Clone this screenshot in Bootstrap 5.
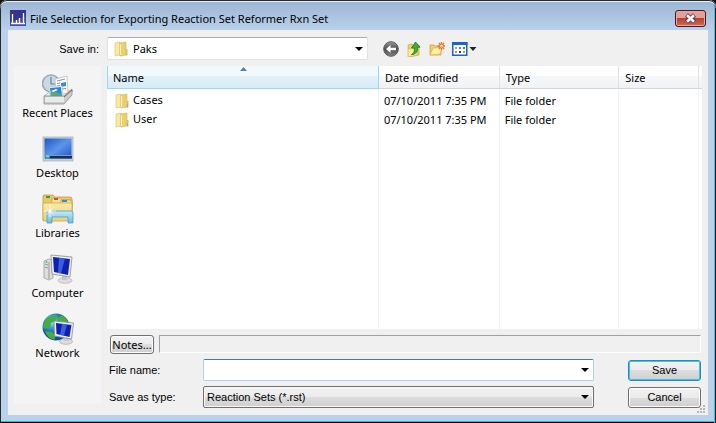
<!DOCTYPE html>
<html lang="en">
<head>
<meta charset="utf-8">
<meta name="viewport" content="width=device-width, initial-scale=1">
<title>File Selection</title>
<link href="https://cdn.jsdelivr.net/npm/bootstrap@5.3.0/dist/css/bootstrap.min.css" rel="stylesheet">
<style>
body{background:#111;color:#000;font:11px/16px "Noto Sans","Open Sans",sans-serif}
.dialog-frame{min-height:100vh;padding:0 8px 8px;background:linear-gradient(#9ab5d3,#b9d1ea 30px);border-radius:7px 7px 0 0;box-shadow:inset 0 1px #26292e,inset 0 2px #e8f0f8,inset 1px 0 #26292e,inset -1px 0 #111,inset -2px 0 #3cc5e2,inset 0 -1px #000,inset 0 -2px #2db9d6}
.titlebar{height:30px;padding:10px 2px 0}
.title-text{font-size:11px;line-height:18px;font-weight:400;margin-left:4px}
.close-btn{width:31px;height:17px;border:1px solid #4b1620;border-radius:3px;box-shadow:inset 0 0 0 1px #e5a9a0;background:linear-gradient(#dfa198 0 45%,#bb3f2c 50%,#cf6b58)}
.dialog-body{background:#f0f0f0;padding:7px 6px 7px}
.classic{font-family:"Liberation Sans",Arial,sans-serif;font-size:11px}
.look-row{height:23px;margin-bottom:6px;gap:16px}
.look-label{width:87px;margin-right:-10px;padding-right:2px}
select.combo,.name-box{border-radius:2px;color:#000;appearance:none}
.look-select{width:261px;height:23px;padding:0 20px 0 25px;border:1px solid #dfe2e9;border-top-color:#abadb3;
background:url("data:image/svg+xml,%3Csvg xmlns='http://www.w3.org/2000/svg' width='8' height='4'%3E%3Cpath d='M0 0h8L4 4z'/%3E%3C/svg%3E") right 4px center no-repeat,url("data:image/svg+xml,%3Csvg xmlns='http://www.w3.org/2000/svg' width='14' height='16'%3E%3Cpath d='M1 2l5-1v13l-5 1z' fill='%23f7e9a4' stroke='%23dcc263' stroke-width='.6'/%3E%3Cpath d='M6 2l6-1v13l-6 1z' fill='%23ecd070' stroke='%23cfae4c' stroke-width='.6'/%3E%3Cpath d='M12 8h1.500v6l-1.500 1z' fill='%23d8c06a'/%3E%3Cpath d='M6.500 3v11' stroke='%23fff6c8'/%3E%3C/svg%3E") 6px center no-repeat,#fff}
.tool-btn{border:0;background:none;padding:0;display:flex;align-items:center}
.tools{gap:7px;margin-left:-1px}
.places{width:87px;background:#f4f4f4;padding-top:3px}
.place{border:0;background:none;height:60px;padding:4px 0 0;color:#000;width:100%;display:flex;flex-direction:column;align-items:center;white-space:nowrap}
.place svg{display:block;flex:none}
.main-pane{min-width:0;margin-left:6px}
.file-list{background:#fff;min-height:160px}
.file-table{table-layout:fixed;border-collapse:separate;border-spacing:0;width:100%;height:100%;white-space:nowrap}
.file-table th{height:23px;font-weight:400;padding:2px 6px 0;border-right:1px solid #e0e1e4;border-bottom:1px solid #d5d5d5;background:linear-gradient(#fff 0 45%,#f7f8fa 45%,#f1f2f4)}
.file-table th.sorted{position:relative;border-color:#96d9f9;border-left:1px solid #96d9f9;padding-left:5px;background:linear-gradient(#f2f9fc 0 45%,#e1f1f9 45%,#d8ecf6)}
.sort-mark{position:absolute;left:49%;top:1px}
.file-table td{padding:0 5px;height:19px;border-right:1px solid #edf3fb}
.file-table td:first-child{padding-left:8px}
.file-table tr.first-file td{height:21px;padding-top:2px}
.file-table tr.blank td{height:auto}
.file-table th:last-child,.file-table td:last-child{border-right:0;padding:0}
.w-name{width:45.700%}
.w-date{width:20.300%}
.w-type{width:20.100%}
.w-size{width:13.400%}
.notes-row{margin:6px 1px 5px 3px;gap:5px}
.win-btn{border:1px solid #707070;border-radius:3px;color:#000;box-shadow:inset 0 0 0 1px #fcfcfc;background:linear-gradient(#f2f2f2 0,#ebebeb 50%,#dddddd 50%,#cfcfcf);padding:0;text-align:center}
.notes-btn{width:44px;height:19px;line-height:16px}
.notes-box{height:18px;border:1px solid #fff;border-top-color:#a0a0a0;border-left-color:#a0a0a0}
.form-line{height:22px;margin-bottom:5px;padding:0 1px 0 2px}
.form-line label{width:94px}
.action-btn{width:73px;height:21px;margin-left:34px;flex:none}
.default-btn{border-color:#3c7fb1;box-shadow:inset 0 0 0 1px #35c8f2}
.name-wrap{background:#fff;border:1px solid #b5cfe7;border-top-color:#3d7bad;border-radius:2px;height:22px}
.name-box{border:0;background:none;outline:0;padding:0 4px;min-width:0}
.type-select{height:22px;border:1px solid #707070;padding:0 20px 0 3px;
background:url("data:image/svg+xml,%3Csvg xmlns='http://www.w3.org/2000/svg' width='8' height='4'%3E%3Cpath d='M0 0h8L4 4z'/%3E%3C/svg%3E") right 4px center no-repeat,linear-gradient(#f2f2f2,#ebebeb 50%,#ddd 50%,#cfcfcf);box-shadow:inset 0 0 0 1px #f8f8f8}
.grip{position:absolute;right:2px;bottom:1px}
</style>
</head>
<body>
<svg width="0" height="0" class="position-absolute" aria-hidden="true">
<defs>
<linearGradient id="desk" x2="1" y2="1"><stop stop-color="#1c58c4"/><stop offset=".5" stop-color="#5b95ea"/><stop offset="1" stop-color="#1e55c5"/></linearGradient>
<linearGradient id="gold" x2="0" y2="1"><stop stop-color="#f9eaa6"/><stop offset="1" stop-color="#ead07b"/></linearGradient>
<linearGradient id="glass" x2="0" y2="1"><stop stop-color="#c3ebfa"/><stop offset="1" stop-color="#6dbce2"/></linearGradient>
<radialGradient id="globe" cx=".35" cy=".3"><stop stop-color="#a8e6fb"/><stop offset=".55" stop-color="#2f8fd6"/><stop offset="1" stop-color="#12509e"/></radialGradient>
<linearGradient id="ball" x2="0" y2="1"><stop stop-color="#9a9a9a"/><stop offset=".5" stop-color="#4c4c4c"/><stop offset="1" stop-color="#858585"/></linearGradient>
<symbol id="folder" viewBox="0 0 14 16"><path d="M1 2l5-1v13l-5 1z" fill="#f7e9a4" stroke="#dcc263" stroke-width=".6"/><path d="M6 2l6-1v13l-6 1z" fill="#ecd070" stroke="#cfae4c" stroke-width=".6"/><path d="M12 8h1.500v6l-1.500 1z" fill="#d8c06a"/><path d="M12.500 11v3" stroke="#7fb2dd"/><path d="M6.500 3v11" stroke="#fff6c8"/></symbol>
</defs></svg>

<div class="dialog-frame d-flex flex-column">
<header class="titlebar d-flex align-items-start">
<svg class="flex-shrink-0" width="16" height="16" aria-hidden="true"><rect width="16" height="16" fill="#4a4a9e"/><path d="M0 0h16v6L0 12z" fill="#34348c"/><path d="M2.500 4v9M6.500 10v3M9.500 8v5M13.500 3v10M1 13.500h14" stroke="#fff" stroke-width="1.300"/></svg>
<h1 class="title-text mb-0 flex-grow-1">File Selection for Exporting Reaction Set Reformer Rxn Set</h1>
<button type="button" class="close-btn p-0 d-flex align-items-center justify-content-center" aria-label="Close"><svg width="13" height="11"><path d="M2.500 2l8 7M10.500 2l-8 7" stroke="#55414d" stroke-width="4.500"/><path d="M3 2.200l7 6.600M10 2.200l-7 6.600" stroke="#f5f5f7" stroke-width="2.600"/></svg></button>
</header>

<main class="dialog-body flex-grow-1 d-flex flex-column position-relative">
<div class="look-row d-flex align-items-center">
<label class="look-label classic text-end" for="lookin">Save in:</label>
<select id="lookin" class="combo look-select"><option>Paks</option></select>
<div class="tools d-flex align-items-center">
<button type="button" class="tool-btn" aria-label="Back"><svg width="16" height="16"><circle cx="8" cy="8" r="7.300" fill="url(#ball)" stroke="#5b5b5b"/><path d="M3 8l4.500-4v2.800H13v2.400H7.500V12z" fill="#fff"/></svg></button>
<button type="button" class="tool-btn" aria-label="Up one level"><svg width="16" height="16"><path d="M2 4l4-1 1 2 6-1v10l-10 2z" fill="#efd165" stroke="#cfa638" stroke-width=".7"/><path d="M2 8l10-2-1 8-9 2z" fill="#fbeb9a" stroke="#d9b54a" stroke-width=".7"/><path d="M5.500 13.500c2.500-1 3.200-3 2.700-6.500H5.500L9.500 1l4.500 5.200h-2.500c.4 4.300-1.500 7.300-6 7.300z" fill="#3fae35" stroke="#167a19" stroke-width=".8"/></svg></button>
<button type="button" class="tool-btn" aria-label="New folder"><svg width="16" height="16"><path d="M1 4h4l1 1h6v9H1z" fill="#f0cf66" stroke="#d2a23a" stroke-width=".8"/><path d="M1 14L4 7l9-1-2 7z" fill="#fdf0a9" stroke="#dcb54e" stroke-width=".8"/><path d="M12.500 1v8M8.500 5h8M10 2l5 6M15 2l-5 6" stroke="#ee6b32" stroke-width="1.300"/><circle cx="12.500" cy="5" r="1.500" fill="#ffe46b"/></svg></button>
<button type="button" class="tool-btn" aria-label="View menu"><svg width="25" height="16"><rect x=".75" y="1.750" width="14" height="12.500" fill="#fff" stroke="#1865cc" stroke-width="1.500"/><path d="M0 1h15.500v3H0z" fill="#1865cc"/><path d="M3 6h2v2H3z" fill="#9b9ed0"/><path d="M7 6h2v2H7z" fill="#2b91d8"/><path d="M11 6h2v2h-2z" fill="#2b9b39"/><path d="M3 10h2v2H3z" fill="#f07b4a"/><path d="M7 10h2v2H7z" fill="#24399b"/><path d="M11 10h2v2h-2z" fill="#d6a51f"/><path d="M17.500 6h7L21 10z" fill="#222"/></svg></button>
</div>
</div>

<div class="d-flex flex-grow-1">
<nav class="places flex-shrink-0 mb-1" aria-label="Places">
<button type="button" class="place"><svg width="32" height="32"><path d="M2 23l7-5h22l-8 7z" fill="#eee" stroke="#999" stroke-width=".6"/><circle cx="9" cy="10.500" r="8.500" fill="#c9dae5" stroke="#9babb6" stroke-width="1.600"/><path d="M9 4v7h4" fill="none" stroke="#6b8294" stroke-width="1.200"/><path d="M13 6l12-3 1 17-12 2z" fill="#fbfbfb" stroke="#b1b6ba" stroke-width=".7"/><path d="M15 8l8-2M15 10.500l3-.5M15 13l3-.5M20 16l4-.5" stroke="#8c9096"/><path d="M19 10l5-1v4l-5 1z" fill="#3a8dcc"/><path d="M7 14l13-1 1 12H8z" fill="#fff" stroke="#bbb" stroke-width=".6"/><path d="M8 15l11-1 1 9H9z" fill="#2488d8"/><path d="M8.500 20l4-2 7 3v2l-11 1z" fill="#5ba67a"/><path d="M9 18l5-2 2 1-5 2z" fill="#fff"/><path d="M2 23h20l8-7v6l-8 9H2z" fill="#ccc" stroke="#858585" stroke-width=".7"/><path d="M3 24h19v5H3z" fill="#eaeaea"/><path d="M22 24l8-7" stroke="#666"/></svg>Recent Places</button>
<button type="button" class="place"><svg width="32" height="32"><rect x="1" y="4" width="30" height="24" fill="#c9cfd8" stroke="#a4abb6" stroke-width=".7"/><rect x="2.500" y="5.500" width="27" height="20" fill="url(#desk)"/><path d="M3 22h27v3.500H3z" fill="#17315b"/><path d="M3 22.500h27" stroke="#7e9ac4"/><circle cx="5.500" cy="23.500" r="2.500" fill="#36a3c7"/><path d="M4 23h3" stroke="#f4e35c"/></svg>Desktop</button>
<button type="button" class="place"><svg width="32" height="32"><path d="M1 27V3q0-1 1-1h9l2 2h15q2 0 2 2v21z" fill="#e8c766" stroke="#bb953b" stroke-width=".7"/><path d="M10 14V5h8l2 2h10v8z" fill="#f5df98" stroke="#c4a14d" stroke-width=".7"/><path d="M19 14V7h9l2 2v17h-5z" fill="#f5df98" stroke="#c4a14d" stroke-width=".7"/><path d="M1 10h29v18H1z" fill="url(#gold)" stroke="#c9a54c" stroke-width=".7"/><path d="M4 3h4v2H4z" fill="#29a53b"/><path d="M12 5h4v2h-4z" fill="#d84b36"/><path d="M20 7h5v2h-5z" fill="#338ddb"/><path d="M5 30V20q0-2 2-2h22q2 0 2 2v10h-5v-6H10v6z" fill="url(#glass)" stroke="#4d9fc9" stroke-width=".8"/><path d="M8 12v12M2 18h12" stroke="#fff" stroke-width=".7"/><path d="M4 14l8 8M12 14l-8 8" stroke="#fff" stroke-width=".5"/><circle cx="8" cy="18" r="1.600" fill="#fff"/></svg>Libraries</button>
<button type="button" class="place"><svg width="32" height="32"><path d="M2 8l5-2 4 1v18l-4 2-5-2z" fill="#dedede" stroke="#949494" stroke-width=".7"/><path d="M7 9v17M3 11l3 1M3 14l3 1" stroke="#999"/><circle cx="4.500" cy="9" r="1" fill="#3bd04b"/><ellipse cx="23" cy="27.500" rx="7" ry="2.800" fill="#dedede" stroke="#aaa" stroke-width=".6"/><path d="M20 21h5v6h-5z" fill="#c5c5c5"/><path d="M9 2l21 2-2 20-18-3z" fill="#eee" stroke="#8b8b8b" stroke-width=".8"/><path d="M11 4l17 2-2 16-14-3z" fill="#0c22ae"/><path d="M17 4.800l6 .7-4 15-3-.6z" fill="#4e73e8" opacity=".75"/></svg>Computer</button>
<button type="button" class="place"><svg width="32" height="32"><circle cx="14" cy="14" r="13.500" fill="url(#globe)"/><path d="M4 6l7-4 5 1-3 5-4 2-1 4-4 2-3-1q0-5 3-9zM19 2q5 2 7 7l-7 2-4-4zM3 18l7 1 4 4-2 4q-7-2-9-9z" fill="#45ad43"/><ellipse cx="24" cy="28.500" rx="6.500" ry="2.800" fill="#ddd" stroke="#9b9b9b" stroke-width=".6"/><path d="M22 23h5v5h-5z" fill="#c8c8c8"/><path d="M12 8l19.500 2-2 16-17-3z" fill="#eee" stroke="#8a8a8a" stroke-width=".8"/><path d="M14 10l15.500 2-2 12-13-3z" fill="#0c22ae"/><path d="M20 10.700l5 .7-3 11.300-4-.7z" fill="#4e73e8" opacity=".75"/></svg>Network</button>
</nav>

<section class="main-pane flex-grow-1 d-flex flex-column">
<div class="file-list flex-grow-1 d-grid">
<table class="file-table">
<colgroup><col class="w-name"><col class="w-date"><col class="w-type"><col class="w-size"><col></colgroup>
<thead><tr><th class="sorted" scope="col" aria-sort="ascending">Name<svg class="sort-mark" width="7" height="4"><path d="M0 4l3.500-4L7 4z" fill="#4f86a5"/></svg></th><th scope="col">Date modified</th><th scope="col">Type</th><th scope="col">Size</th><th></th></tr></thead>
<tbody>
<tr class="first-file"><td><svg width="14" height="16" class="me-1"><use href="#folder"/></svg>Cases</td><td>07/10/2011 7:35 PM</td><td>File folder</td><td></td><td></td></tr>
<tr><td><svg width="14" height="16" class="me-1"><use href="#folder"/></svg>User</td><td>07/10/2011 7:35 PM</td><td>File folder</td><td></td><td></td></tr>
<tr class="blank"><td></td><td></td><td></td><td></td><td></td></tr>
</tbody>
</table>
</div>
<div class="notes-row d-flex"><button type="button" class="win-btn notes-btn">Notes...</button><div class="notes-box flex-grow-1"></div></div>
<div class="form-line d-flex align-items-center classic"><label for="fname">File name:</label>
<div class="name-wrap flex-grow-1 d-flex"><input id="fname" class="name-box flex-grow-1" type="text"><button type="button" class="tool-btn pe-1" aria-label="Recent names"><svg width="8" height="4"><path d="M0 0h8L4 4z"/></svg></button></div>
<button type="button" class="win-btn default-btn action-btn">Save</button></div>
<div class="form-line d-flex align-items-center classic mb-0"><label for="ftype">Save as type:</label>
<select id="ftype" class="combo type-select flex-grow-1"><option>Reaction Sets (*.rst)</option></select>
<button type="button" class="win-btn action-btn">Cancel</button></div>
</section>
</div>
<svg class="grip" width="9" height="9" aria-hidden="true"><path d="M6 0h2v2H6zM3 3h2v2H3zM6 3h2v2H6zM0 6h2v2H0zM3 6h2v2H3zM6 6h2v2H6z" fill="#b8b8b8"/></svg>
</main>
</div>
<script src="https://cdn.jsdelivr.net/npm/bootstrap@5.3.0/dist/js/bootstrap.bundle.min.js"></script>
</body>
</html>
